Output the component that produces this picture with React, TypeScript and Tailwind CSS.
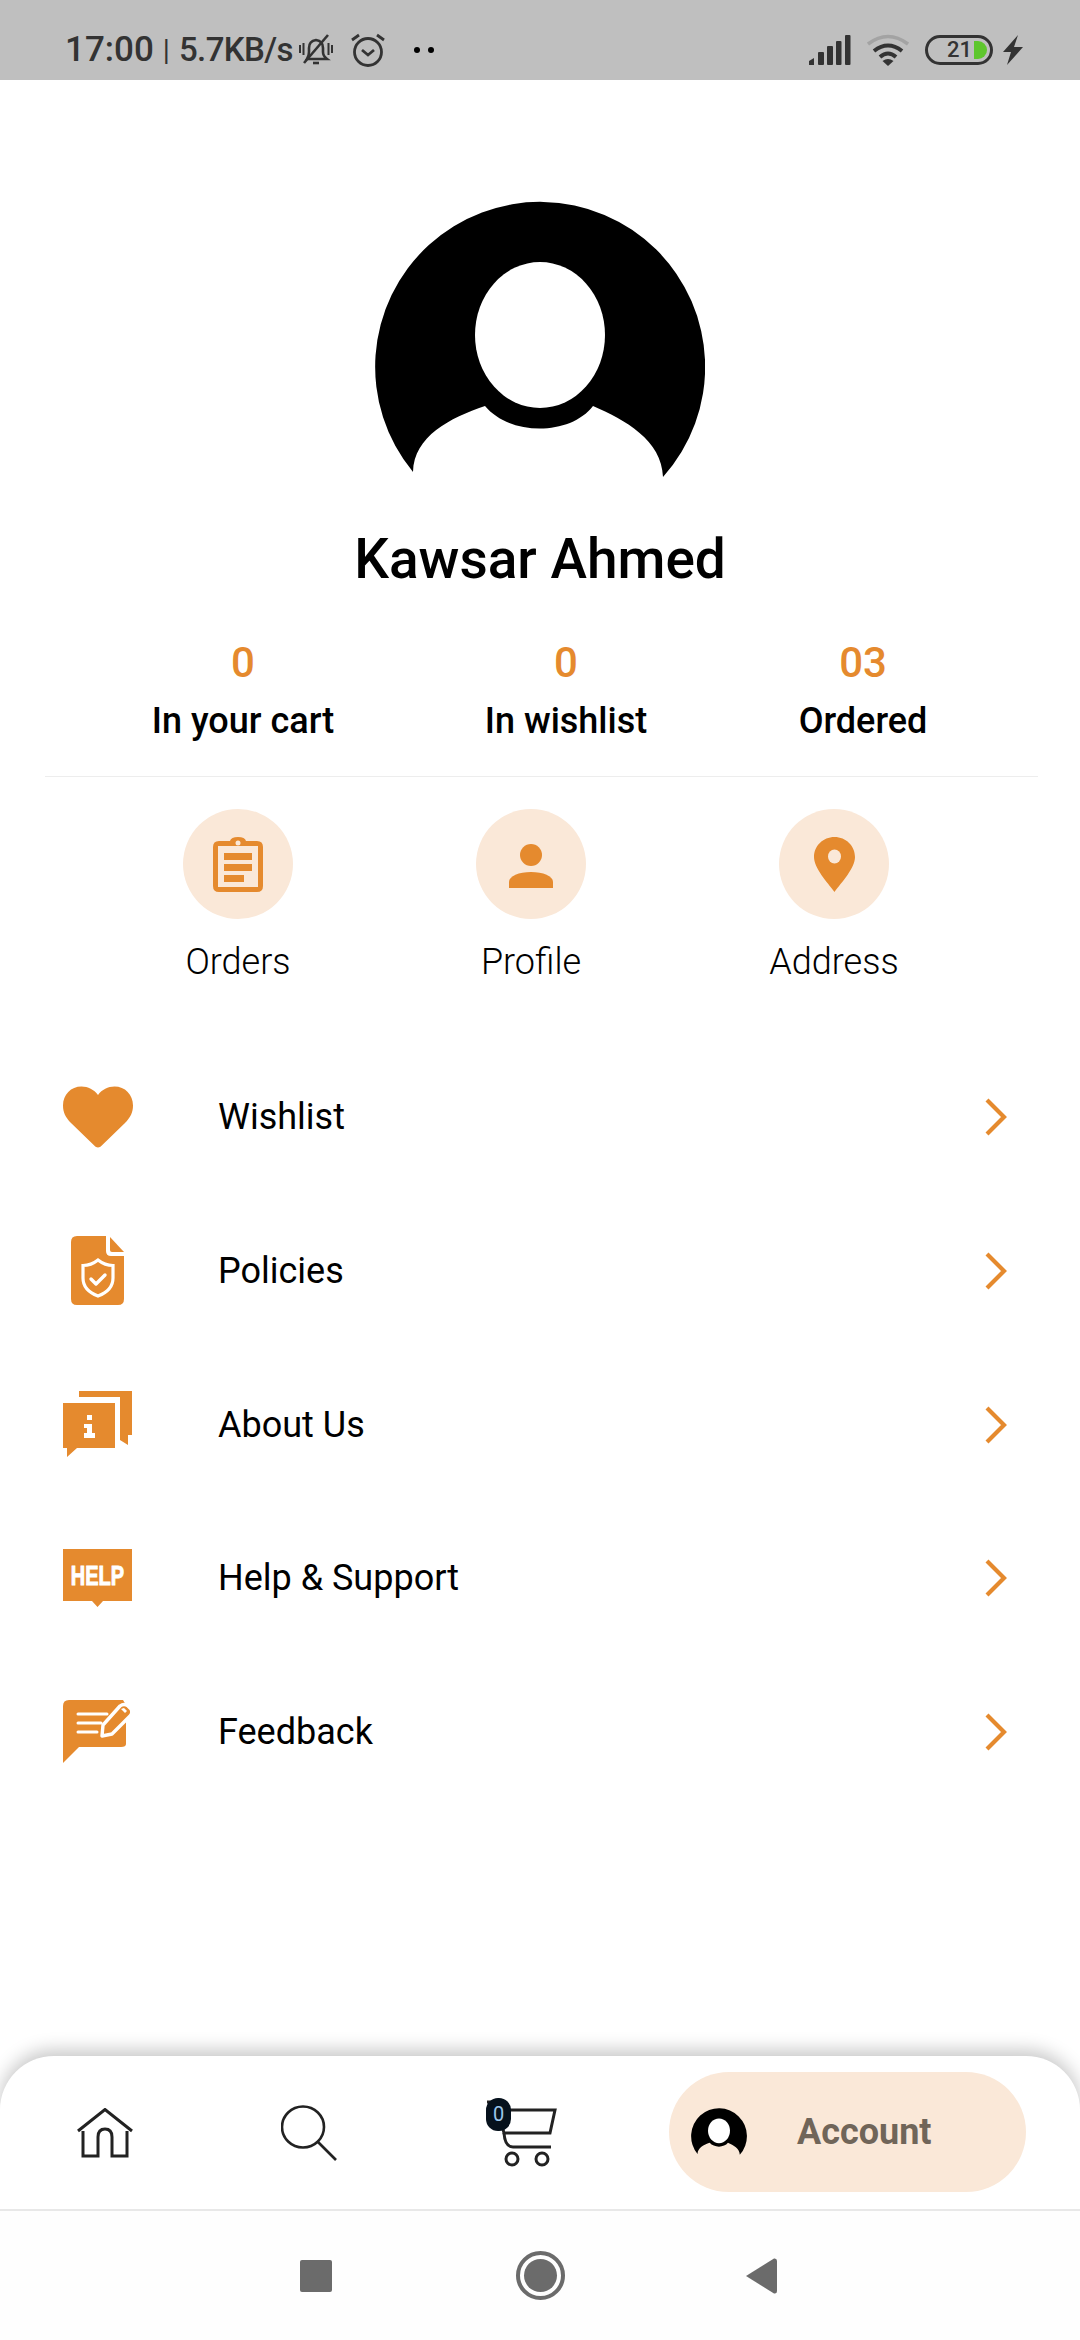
const O = "#e58a2e";

function Avatar({ w, h }: { w: number; h: number }) {
  return (
    <svg width={w} height={h} viewBox="375 200 330 278" className="block">
      <path
        fill="#000"
        d="M413 472 A165 165 0 1 1 663 477 C662 440 625 420 593 406 C570 436 510 436 485 406 C450 418 414 436 413 472 Z"
      />
      <ellipse cx="540" cy="335" rx="65" ry="73" fill="#fff" />
    </svg>
  );
}

function Chevron() {
  return (
    <svg width="24" height="38" viewBox="0 0 24 38" fill="none" stroke={O} strokeWidth="4.2">
      <path d="M3 2 L20 19 L3 36" />
    </svg>
  );
}

function Heart() {
  return (
    <svg width="70" height="62" viewBox="0 0 70 62">
      <path fill={O} d="M35 61.5 C33.5 61.5 32.5 60.7 31.5 59.8 L8 37 C2.5 31.5 0 26 0 19.5 C0 8.5 8 0.5 18.5 0.5 C25 0.5 31 3.5 35 9 C39 3.5 45 0.5 51.5 0.5 C62 0.5 70 8.5 70 19.5 C70 26 67.5 31.5 62 37 L38.5 59.8 C37.5 60.7 36.5 61.5 35 61.5 Z" />
    </svg>
  );
}

function DocIcon() {
  return (
    <svg width="54" height="70" viewBox="0 0 54 70">
      <path fill={O} d="M6 0 H35 V15 Q35 20 40 20 H53 V63 Q53 69 47 69 H6 Q0 69 0 63 V6 Q0 0 6 0 Z" />
      <path fill={O} d="M39 1 L53 16 H41 Q39 16 39 14 Z" />
      <path fill="none" stroke="#fff" strokeWidth="3.2" d="M27 24 C32 28 37 29.5 42 29.5 V42 C42 51 35 57 27 60 C19 57 12 51 12 42 V29.5 C17 29.5 22 28 27 24 Z" />
      <path fill="none" stroke="#fff" strokeWidth="3.4" strokeLinecap="round" strokeLinejoin="round" d="M20 43 L25 48 L34 39" />
    </svg>
  );
}

function InfoIcon() {
  return (
    <svg width="70" height="67" viewBox="0 0 70 67">
      <path fill={O} d="M16 0 H69 V44 H65 V54 L57 49 V6 H16 Z" />
      <path fill={O} d="M0 12 H52 V57 H14 L4 66 V57 H0 Z" />
      <rect x="24" y="24" width="5" height="5" fill="#fff" />
      <path fill="#fff" d="M21 33 H29 V42 H32 V47 H21 V42 H24 V37 H21 Z" />
    </svg>
  );
}

function HelpIcon() {
  return (
    <svg width="70" height="59" viewBox="0 0 70 59">
      <path fill={O} d="M0 0 H69 V52 H40 L34.5 58 L29 52 H0 Z" />
      <text x="34.5" y="25.7" transform="scale(1 1.4)" textAnchor="middle" fontFamily="'Liberation Sans',sans-serif" fontWeight="700" fontSize="20" fill="#fff" stroke="#fff" strokeWidth="0.7">HELP</text>
    </svg>
  );
}

function FeedbackIcon() {
  return (
    <svg width="70" height="64" viewBox="0 0 70 64">
      <path fill={O} d="M6 0 H60 L63 5 V44 Q63 47 58 47 H16 L0 63 V6 Q0 0 6 0 Z" />
      <path stroke="#fff" strokeWidth="3" strokeLinecap="round" d="M15 14 H44 M15 23 H38 M15 32 H34" fill="none" />
      <path fill={O} stroke="#fff" strokeWidth="3.4" strokeLinejoin="round" d="M57 6 Q61 3 65 6 L68 9 Q70 13 67 16 L49 34 L39 36 L40 25 Z" />
      <path fill="#fff" d="M58 9 L61 8 L64 11 L62 13 Z" />
    </svg>
  );
}

function HomeIcon() {
  return (
    <svg width="56" height="50" viewBox="0 0 56 50" fill="none" stroke="#222" strokeWidth="3">
      <path d="M1 23 L28 1.5 L55 23" />
      <path d="M6 23 V48 H21 V29 Q21 21 28 21 Q35 21 35 29 V48 H50 V23" />
    </svg>
  );
}

function SearchIcon() {
  return (
    <svg width="56" height="56" viewBox="0 0 56 56" fill="none" stroke="#222" strokeWidth="2.6">
      <ellipse cx="22" cy="22" rx="21" ry="20.5" />
      <path d="M37 37 L55 55" />
    </svg>
  );
}

function CartIcon() {
  return (
    <div className="relative w-[72px] h-[70px]">
      <svg width="72" height="70" viewBox="0 0 72 70" fill="none" stroke="#222" strokeWidth="3" className="absolute left-0 top-0">
        <path d="M1 4 H10 L18 35 H64 L69 12 H12" />
        <path d="M18 35 Q19 49 27 49 H65" />
        <circle cx="26" cy="61" r="6" strokeWidth="3" />
        <circle cx="56" cy="61" r="6" strokeWidth="3" />
      </svg>
      <div className="absolute left-0 top-0 w-[25px] h-[33px] rounded-[12px] bg-[#06111c] text-[#9cc6ea] text-[20px] leading-[33px] text-center">
        0
      </div>
    </div>
  );
}

function Stat({ value, label, cls }: { value: string; label: string; cls: string }) {
  return (
    <div className={`w-[280px] flex flex-col items-center ${cls}`}>
      <div className="text-[#e58a2e] text-[42px] leading-[44px] font-medium">{value}</div>
      <div className="text-black text-[36px] leading-[44px] font-medium mt-[14px]">{label}</div>
    </div>
  );
}

function Quick({ label, cls, children }: { label: string; cls: string; children: React.ReactNode }) {
  return (
    <div className={`w-[280px] flex flex-col items-center ${cls}`}>
      <div className="w-[110px] h-[110px] rounded-full bg-[#fae8d8] flex items-center justify-center">{children}</div>
      <div className="text-black text-[36px] leading-[44px] font-light mt-[21px]">{label}</div>
    </div>
  );
}

function Row({ label, icon }: { label: string; icon: React.ReactNode }) {
  return (
    <div className="h-[153.7px] flex items-center pl-[63px] pr-[72px]">
      <div className="w-[70px] flex justify-center">{icon}</div>
      <div className="ml-[85px] flex-1 text-black text-[36px] leading-[44px]">{label}</div>
      <Chevron />
    </div>
  );
}

export default function App() {
  return (
    <div className="w-[1080px] h-[2340px] bg-white flex flex-col overflow-hidden font-['Roboto',sans-serif]">
      {/* Status bar */}
      <div className="h-[80px] shrink-0 bg-[#bfbfbf] flex items-center pl-[65px] pr-[57px] pt-[20px] text-[#333]">
        <span className="text-[35px] leading-[40px] font-medium">17:00</span>
        <span className="text-[29px] leading-[40px] ml-[9px]">|</span>
        <span className="text-[33px] leading-[40px] font-medium ml-[9px] tracking-[-0.6px]">5.7KB/s</span>
        <svg width="34" height="32" viewBox="0 0 34 32" fill="none" stroke="#333" strokeWidth="2.6" className="ml-[6px]">
          <path d="M8 25 Q10 22 10 18 V14 Q10 7 17 6 Q24 7 24 14 V18 Q24 22 28 25 Z" />
          <path d="M14 29 H20" />
          <path d="M29 1 L5 29" />
          <path d="M1 11 V19 M4.5 9 V21 M29.5 9 V21 M33 11 V19" strokeWidth="2" />
        </svg>
        <svg width="36" height="34" viewBox="0 0 36 34" fill="none" stroke="#333" strokeWidth="2.8" className="ml-[17px]">
          <circle cx="18" cy="19" r="13.5" />
          <path d="M12 17 L18 22 L24 17" />
          <path d="M2 7 L9 2 M34 7 L27 2" />
        </svg>
        <div className="ml-[28px] flex gap-[8px]">
          <div className="w-[6px] h-[6px] rounded-full bg-black" />
          <div className="w-[6px] h-[6px] rounded-full bg-black" />
        </div>
        <div className="flex-1" />
        <svg width="42" height="30" viewBox="0 0 42 30" fill="#333">
          <path d="M0 30 V26 L5 23 V30 Z" />
          <rect x="9" y="17" width="6" height="13" rx="1" />
          <rect x="18" y="11" width="6" height="19" rx="1" />
          <rect x="27" y="6" width="5.5" height="24" rx="1" />
          <rect x="36" y="0" width="5.5" height="30" rx="1" />
        </svg>
        <svg width="42" height="32" viewBox="0 0 42 32" fill="none" className="ml-[16px]">
          <path d="M1 10 Q21 -5 41 10" stroke="#a3a3a3" strokeWidth="3.6" />
          <path d="M7 17 Q21 6 35 17" stroke="#333" strokeWidth="4" />
          <path d="M13 23 Q21 16 29 23" stroke="#333" strokeWidth="4" />
          <path d="M21 32 L15.5 27 Q21 23 26.5 27 Z" fill="#333" />
        </svg>
        <div className="ml-[16px] relative w-[68px] h-[30px] rounded-[15px] border-[3px] border-[#333]">
          <div className="absolute right-[3px] top-[3px] w-[13px] h-[18px] rounded-r-[9px] bg-[#5ec62d]" />
          <div className="absolute left-[19px] top-[-3px] text-[22px] leading-[30px] font-medium text-[#333]">21</div>
        </div>
        <svg width="20" height="30" viewBox="0 0 20 30" fill="#333" className="ml-[10px]">
          <path d="M15 0 L0 17 H8 L4 30 L20 12 H11 Z" />
        </svg>
      </div>

      {/* Profile */}
      <div className="flex flex-col items-center pt-[120px]">
        <Avatar w={330} h={278} />
        <div className="text-black text-[55px] leading-[60px] font-medium mt-[51px]">Kawsar Ahmed</div>
      </div>

      {/* Stats */}
      <div className="flex mt-[52px] pl-[103px]">
        <Stat value="0" label="In your cart" cls="" />
        <Stat value="0" label="In wishlist" cls="ml-[43px]" />
        <Stat value="03" label="Ordered" cls="ml-[17px]" />
      </div>
      <div className="h-[1px] bg-[#ededed] ml-[45px] mr-[42px] mt-[33px]" />

      {/* Quick links */}
      <div className="flex mt-[32px] pl-[98px]">
        <Quick label="Orders" cls="">
          <svg width="50" height="55" viewBox="0 0 50 55">
            <path fill={O} d="M6 4 H17 Q18 0 25 0 Q32 0 33 4 H44 Q50 4 50 10 V49 Q50 55 44 55 H6 Q0 55 0 49 V10 Q0 4 6 4 Z" />
            <rect x="5" y="9" width="40" height="41" fill="#fae8d8" />
            <circle cx="25" cy="6" r="2.5" fill="#fae8d8" />
            <path fill={O} d="M11 16 H39 V23 H11 Z M11 27 H39 V34 H11 Z M11 38 H31 V45 H11 Z" />
          </svg>
        </Quick>
        <Quick label="Profile" cls="ml-[13px]">
          <svg width="44" height="44" viewBox="0 0 44 44" className="mt-[4px]">
            <ellipse cx="22" cy="11" rx="11" ry="11" fill={O} />
            <path fill={O} d="M0 44 V38 C0 32 10 28 22 28 C34 28 44 32 44 38 V44 Z" />
          </svg>
        </Quick>
        <Quick label="Address" cls="ml-[23px]">
          <svg width="41" height="55" viewBox="0 0 41 55">
            <path fill={O} d="M20.5 0 C32 0 41 9 41 20 C41 31 28 45 20.5 55 C13 45 0 31 0 20 C0 9 9 0 20.5 0 Z" />
            <ellipse cx="20.5" cy="19.5" rx="6.5" ry="7" fill="#fae8d8" />
          </svg>
        </Quick>
      </div>

      {/* Menu */}
      <div className="mt-[56.5px] flex flex-col">
        <Row label="Wishlist" icon={<Heart />} />
        <Row label="Policies" icon={<DocIcon />} />
        <Row label="About Us" icon={<InfoIcon />} />
        <Row label="Help & Support" icon={<HelpIcon />} />
        <Row label="Feedback" icon={<FeedbackIcon />} />
      </div>

      <div className="flex-1" />

      {/* Bottom nav */}
      <div className="h-[155px] shrink-0 bg-white rounded-t-[54px] shadow-[0_-6px_18px_rgba(0,0,0,0.22)] border-b-[2px] border-[#e8e8e8] flex items-center pl-[77px] relative">
        <HomeIcon />
        <div className="ml-[148px]"><SearchIcon /></div>
        <div className="ml-[149px]"><CartIcon /></div>
        <div className="ml-[111px] w-[357px] h-[120px] rounded-[60px] bg-[#fae8d8] flex items-center pl-[22px] mt-[-2px]">
          <Avatar w={56} h={47} />
          <div className="ml-[50px] text-[#706559] text-[36px] leading-[40px] font-bold">Account</div>
        </div>
      </div>

      {/* System nav */}
      <div className="h-[129px] shrink-0 bg-[#fefefe] flex items-center relative">
        <div className="ml-[300px] w-[32px] h-[32px] rounded-[2px] bg-[#6b6b6b]" />
        <div className="ml-[183.5px] w-[49px] h-[49px] rounded-full border-[4px] border-[#6b6b6b] flex items-center justify-center">
          <div className="w-[33px] h-[33px] rounded-full bg-[#6b6b6b]" />
        </div>
        <svg width="32" height="36" viewBox="0 0 32 36" className="ml-[180px]">
          <path fill="#6b6b6b" d="M1 18 L29 0.5 Q32 0 32 3 V33 Q32 36 29 35.5 Z" />
        </svg>
      </div>
    </div>
  );
}
